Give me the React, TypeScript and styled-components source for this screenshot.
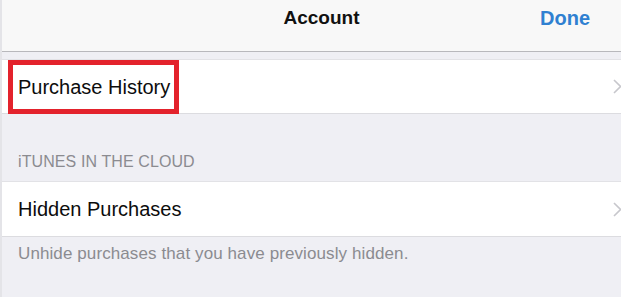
import React from "react";
import styled, { createGlobalStyle } from "styled-components";

const Global = createGlobalStyle`
  html, body { margin: 0; padding: 0; }
  body {
    width: 621px;
    height: 297px;
    overflow: hidden;
    background: #efeff4;
    font-family: "Liberation Sans", Arial, sans-serif;
    -webkit-font-smoothing: antialiased;
  }
`;

const Page = styled.div`
  width: 621px;
  height: 297px;
  box-sizing: border-box;
  border-left: 2px solid #e4e4e8;
  background: #efeff4;
  display: flex;
  flex-direction: column;
  overflow: hidden;
`;

const NavBar = styled.header`
  height: 52px;
  box-sizing: border-box;
  background: #f8f8f8;
  border-bottom: 1px solid #b8b8bc;
  display: grid;
  grid-template-columns: 1fr auto 1fr;
  align-items: start;
  padding: 5px 31px 0 51px;
`;

const Title = styled.h1`
  grid-column: 2;
  margin: 0;
  font-size: 19px;
  line-height: 26px;
  font-weight: 700;
  color: #111;
`;

const DoneButton = styled.button`
  grid-column: 3;
  justify-self: end;
  border: 0;
  background: none;
  padding: 0;
  font-family: inherit;
  font-size: 20px;
  line-height: 26px;
  font-weight: 700;
  color: #2f80d1;
`;

const Spacer = styled.div<{ $h: number }>`
  height: ${(p) => p.$h}px;
  flex: none;
`;

const Row = styled.div<{ $h: number; $pl: number }>`
  height: ${(p) => p.$h}px;
  flex: none;
  box-sizing: border-box;
  background: #fff;
  border-top: 1px solid #e2e2e6;
  border-bottom: 1px solid #dcdce0;
  display: flex;
  align-items: center;
  justify-content: space-between;
  padding-left: ${(p) => p.$pl}px;
`;

const Label = styled.span`
  font-size: 20px;
  line-height: 24px;
  color: #0c0c0c;
  white-space: nowrap;
`;

const Highlight = styled.span`
  display: inline-flex;
  align-items: center;
  box-sizing: border-box;
  height: 54px;
  padding: 0 4px 0 5px;
  border: 5px solid #e3222c;
`;

const Chevron = styled.svg`
  width: 9px;
  height: 15px;
  flex: none;
  margin-right: -1px;
`;

const SectionHeader = styled.div`
  padding: 38px 16px 9px;
  font-size: 16px;
  line-height: 20px;
  color: #8b8b90;
  letter-spacing: 0.1px;
`;

const Footer = styled.div`
  padding: 7px 16px 0;
  font-size: 17px;
  line-height: 20px;
  color: #8b8b90;
  letter-spacing: 0.1px;
`;

const Arrow = () => (
  <Chevron viewBox="0 0 9 15">
    <path d="M1 1 L7.5 7.5 L1 14" fill="none" stroke="#c7c7cc" strokeWidth="1.6" />
  </Chevron>
);

export default function App() {
  return (
    <>
      <Global />
      <Page>
        <NavBar>
          <Title>Account</Title>
          <DoneButton>Done</DoneButton>
        </NavBar>
        <Spacer $h={7} />
        <Row $h={55} $pl={6}>
          <Highlight>
            <Label>Purchase History</Label>
          </Highlight>
          <Arrow />
        </Row>
        <SectionHeader>iTUNES IN THE CLOUD</SectionHeader>
        <Row $h={56} $pl={16}>
          <Label>Hidden Purchases</Label>
          <Arrow />
        </Row>
        <Footer>Unhide purchases that you have previously hidden.</Footer>
      </Page>
    </>
  );
}
